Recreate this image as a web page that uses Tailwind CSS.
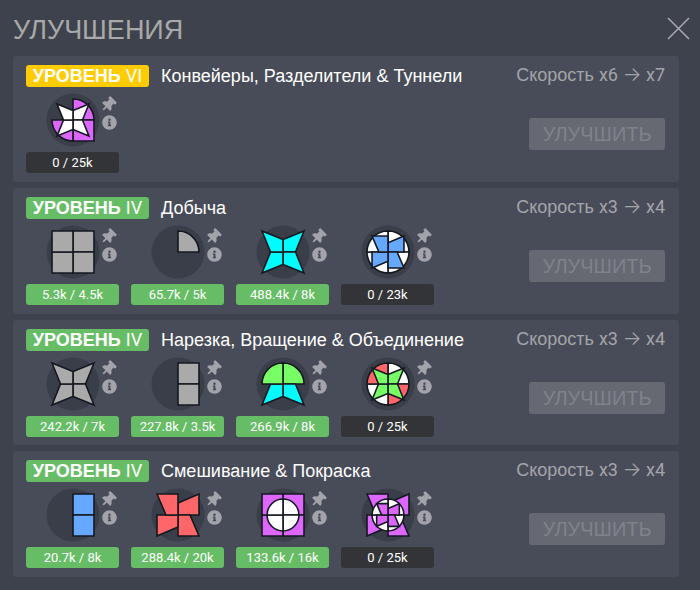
<!DOCTYPE html>
<html lang="ru">
<head>
    <meta charset="UTF-8">
    <meta name="viewport" content="width=device-width, initial-scale=1.0">
    <title>Улучшения</title>
    <script src="https://cdn.jsdelivr.net/npm/@tailwindcss/browser@4"></script>
</head>
<body class="bg-[#3e424c] font-['Liberation_Sans',sans-serif] text-white">
    <!-- Shared shapes: every quarter is drawn top right and rotated into place -->
    <svg class="hidden" aria-hidden="true">
        <defs>
            <path id="rect" vector-effect="non-scaling-stroke" d="M0 0V-21H21V0Z"/>
            <path id="circle" vector-effect="non-scaling-stroke" d="M0 0V-21A21 21 0 0 1 21 0Z"/>
            <path id="star" vector-effect="non-scaling-stroke" d="M0 0V-12.5L21 -21L12.5 0Z"/>
            <path id="windmill" vector-effect="non-scaling-stroke" d="M0 0V-12L21 -21V0Z"/>
            <symbol id="pin" viewBox="-204 -294 498 498">
                <path transform="rotate(45) translate(-192 -256)" d="M298.028 214.267L285.793 96H328c13.255 0 24-10.745 24-24V24c0-13.255-10.745-24-24-24H56C42.745 0 32 10.745 32 24v48c0 13.255 10.745 24 24 24h42.207L85.972 214.267C37.465 236.82 0 277.261 0 328c0 13.255 10.745 24 24 24h136v104.007c0 1.242.289 2.467.845 3.578l24 48c2.941 5.882 11.364 5.893 14.311 0l24-48a8.008 8.008 0 0 0 .845-3.578V352h136c13.255 0 24-10.745 24-24-.001-51.183-37.983-91.42-85.973-113.733z"/>
            </symbol>
            <symbol id="info" viewBox="0 0 512 512">
                <path d="M256 8C119.043 8 8 119.083 8 256c0 136.997 111.043 248 248 248s248-111.003 248-248C504 119.083 392.957 8 256 8zm0 110c23.196 0 42 18.804 42 42s-18.804 42-42 42-42-18.804-42-42 18.804-42 42-42zm56 254c0 6.627-5.373 12-12 12h-88c-6.627 0-12-5.373-12-12v-24c0-6.627 5.373-12 12-12h12v-64h-12c-6.627 0-12-5.373-12-12v-24c0-6.627 5.373-12 12-12h64c6.627 0 12 5.373 12 12v100h12c6.627 0 12 5.373 12 12v24z"/>
            </symbol>
        </defs>
    </svg>

    <div class="flex min-h-screen flex-col pb-[13px] pl-[13px] pr-[21px]">
        <header class="flex h-14 shrink-0 items-center justify-between">
            <h1 class="pt-1 text-[27px] leading-8 text-[#a9a9a9]">УЛУЧШЕНИЯ</h1>
            <button type="button" aria-label="Закрыть" class="-mr-[11px] text-[#a9abb0]">
                <svg class="size-[23px]" viewBox="0 0 23 23" fill="none" stroke="currentColor" stroke-width="1.5">
                    <path d="M1 1L22 22M22 1L1 22"/>
                </svg>
            </button>
        </header>
        <main id="upgrades" class="flex flex-1 flex-col gap-1.5"></main>
    </div>

    <script>
        const colors = { u: '#aaaaaa', w: '#ffffff', p: '#dd66ff', c: '#00fcff', b: '#66a7ff', g: '#78ff66', r: '#ff666a' };
        const shapes = { R: 'rect', C: 'circle', S: 'star', W: 'windmill' };

        // Layers go bottom up, quarters go clockwise from top right
        const upgrades = [
            { level: 'VI', badge: 'bg-[#ffcc00]', title: 'Конвейеры, Разделители & Туннели', from: 'x6', to: 'x7', items: [
                ['CpRpCp--:SwSwSwSw', '0 / 25k', false]
            ]},
            { level: 'IV', badge: 'bg-[#67bd66]', title: 'Добыча', from: 'x3', to: 'x4', items: [
                ['RuRuRuRu', '5.3k / 4.5k', true],
                ['Cu------', '65.7k / 5k', true],
                ['ScScScSc', '488.4k / 8k', true],
                ['CwCwCwCw:WbWbWbWb', '0 / 23k', false]
            ]},
            { level: 'IV', badge: 'bg-[#67bd66]', title: 'Нарезка, Вращение & Объединение', from: 'x3', to: 'x4', items: [
                ['SuSuSuSu', '242.2k / 7k', true],
                ['RuRu----', '227.8k / 3.5k', true],
                ['CgScScCg', '266.9k / 8k', true],
                ['CwCrCwCr:SgSgSgSg', '0 / 25k', false]
            ]},
            { level: 'IV', badge: 'bg-[#67bd66]', title: 'Смешивание & Покраска', from: 'x3', to: 'x4', items: [
                ['RbRb----', '20.7k / 8k', true],
                ['WrWrWrWr', '288.4k / 20k', true],
                ['RpRpRpRp:CwCwCwCw', '133.6k / 16k', true],
                ['WpWpWpWp:CwCwCwCw:WpWpWpWp', '0 / 25k', false]
            ]}
        ];

        function drawShape(key) {
            return key.split(':').map((layer, n) => {
                const scale = [1, 0.76, 0.54][n];
                return layer.match(/../g).map((q, i) => q === '--' ? '' :
                    `<use href="#${shapes[q[0]]}" fill="${colors[q[1]]}" transform="rotate(${i * 90}) scale(${scale})"/>`
                ).join('');
            }).join('');
        }

        function drawItem([key, count, done]) {
            return `
                <li class="w-[93px]">
                    <div class="flex pl-5">
                        <svg class="size-[54px]" viewBox="-27 -27 54 54" stroke="#14181f" stroke-width="1.6">
                            <circle r="26.5" fill="#393e49" stroke="none"/>
                            ${drawShape(key)}
                        </svg>
                        <div class="flex flex-col gap-1 pl-0.5 pt-[3px] text-[#a2a4a9]">
                            <button type="button" aria-label="Закрепить"><svg class="size-[15px]" fill="currentColor"><use href="#pin"/></svg></button>
                            <button type="button" aria-label="Подробнее"><svg class="size-[15px]" fill="currentColor"><use href="#info"/></svg></button>
                        </div>
                    </div>
                    <div class="mt-[5px] h-[21px] rounded-[3px] text-center font-[Roboto] text-[13px] leading-[21px] ${done ? 'bg-[#67bd66]' : 'bg-[#333438]'}">${count}</div>
                </li>`;
        }

        document.getElementById('upgrades').innerHTML = upgrades.map(u => `
            <section class="flex flex-1 justify-between rounded-[3px] bg-[#484c58] pl-[13px] pr-[14px]">
                <div class="pt-[9px]">
                    <div class="flex items-center gap-3 text-lg leading-[22px]">
                        <span class="h-[22px] w-[123px] rounded-[3px] text-center whitespace-nowrap font-bold ${u.badge}">УРОВЕНЬ <span class="font-[Roboto] font-normal">${u.level}</span></span>
                        <h2>${u.title.replace('&', '&amp;')}</h2>
                    </div>
                    <ul class="mt-1.5 flex gap-3">${u.items.map(drawItem).join('')}</ul>
                </div>
                <div class="flex flex-col items-end gap-8 pt-[7px]">
                    <p class="h-[23px] text-lg leading-[23px] text-[#a4a5a8]">Скорость <span class="font-[Roboto]">${u.from} <span class="font-[Inter] text-xl leading-none font-light">→</span> ${u.to}</span></p>
                    <button type="button" disabled class="h-8 w-[136px] rounded-[3px] bg-[#666972] text-xl text-[#7f828a]">УЛУЧШИТЬ</button>
                </div>
            </section>`).join('');
    </script>
</body>
</html>
